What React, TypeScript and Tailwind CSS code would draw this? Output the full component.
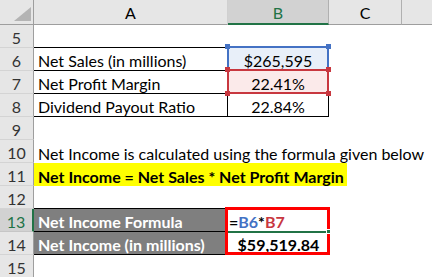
const rows = [5, 6, 7, 8, 9, 10, 11, 12, 13, 14, 15];

function RowHead({ n }: { n: number }) {
  const active = n === 13;
  return (
    <div
      className={`flex items-end justify-center border-b ${
        active
          ? "bg-[#d2d2d2] text-[#217346] border-r-2 border-r-[#217346] border-b-[#c6c6c6]"
          : "bg-[#e6e6e6] text-[#333] border-r border-r-[#9e9e9e] border-b-[#d4d4d4]"
      }`}
    >
      {n}
    </div>
  );
}

export default function App() {
  return (
    <div className="relative w-[432px] h-[277px] overflow-hidden bg-white text-[16px] leading-[19px] text-black font-[family-name:Lato,sans-serif]">
      <div className="grid grid-cols-[34px_194px_101px_73px_30px] grid-rows-[25px_repeat(11,23px)]">
        {/* column headers */}
        <div className="relative bg-[#e6e6e6] border-r border-b border-[#9e9e9e]">
          <svg className="absolute left-[14px] top-[7px]" width="17" height="14" viewBox="0 0 17 14">
            <polygon points="17,0 17,14 0,14" fill="#b4b4b4" />
          </svg>
        </div>
        <div className="flex items-end justify-center pb-[2px] bg-[#e6e6e6] border-r border-r-[#d0d0d0] border-b border-b-[#9e9e9e]">A</div>
        <div className="flex items-end justify-center pb-[1px] bg-[#d2d2d2] text-[#217346] border-r border-r-[#b0b0b0] border-b-2 border-b-[#217346]">B</div>
        <div className="flex items-end justify-center pb-[2px] bg-[#e6e6e6] border-r border-r-[#b0b0b0] border-b border-b-[#9e9e9e]">C</div>
        <div className="bg-[#e6e6e6] border-b border-b-[#9e9e9e]"></div>

        {/* row 5 */}
        <RowHead n={rows[0]} />
        <div className="border-b border-black"></div>
        <div className="border-b border-black"></div>
        <div></div>
        <div></div>

        {/* row 6 */}
        <RowHead n={6} />
        <div className="flex items-end px-[4px] border-r border-b border-black whitespace-nowrap">Net Sales (in millions)</div>
        <div className="flex items-end justify-center border-r border-b border-black bg-[#e8eff9]">$265,595</div>
        <div></div>
        <div></div>

        {/* row 7 */}
        <RowHead n={7} />
        <div className="flex items-end px-[4px] border-r border-b border-black whitespace-nowrap">Net Profit Margin</div>
        <div className="flex items-end justify-center border-r border-b border-black bg-[#fbeaea]">22.41%</div>
        <div></div>
        <div></div>

        {/* row 8 */}
        <RowHead n={8} />
        <div className="flex items-end px-[4px] border-r border-b border-black whitespace-nowrap">Dividend Payout Ratio</div>
        <div className="flex items-end justify-center border-r border-b border-black">22.84%</div>
        <div></div>
        <div></div>

        {/* row 9 */}
        <RowHead n={9} />
        <div className="col-span-4"></div>

        {/* row 10 */}
        <RowHead n={10} />
        <div className="col-span-4 flex items-end px-[4px] whitespace-nowrap">
          Net Income is calculated using the formula given below
        </div>

        {/* row 11 */}
        <RowHead n={11} />
        <div className="col-span-4 flex">
          <div className="w-[313px] flex items-end px-[4px] bg-[#ffff00] font-bold whitespace-nowrap">
            Net Income = Net Sales * Net Profit Margin
          </div>
        </div>

        {/* row 12 */}
        <RowHead n={12} />
        <div className="border-b border-black"></div>
        <div className="border-b border-black"></div>
        <div></div>
        <div></div>

        {/* row 13 */}
        <RowHead n={13} />
        <div className="flex items-end px-[4px] bg-[#7f7f7f] text-white font-bold border-r border-b border-black whitespace-nowrap">Net Income Formula</div>
        <div className="flex items-end px-[1px] font-bold border-b border-black">
          <span>=</span>
          <span className="text-[#4472c4]">B6</span>
          <span>*</span>
          <span className="text-[#c8373f]">B7</span>
        </div>
        <div></div>
        <div></div>

        {/* row 14 */}
        <RowHead n={14} />
        <div className="flex items-end px-[4px] bg-[#7f7f7f] text-white font-bold border-r border-b border-black whitespace-nowrap">Net Income (in millions)</div>
        <div className="flex items-end justify-center font-bold border-b border-black">$59,519.84</div>
        <div></div>
        <div></div>

        {/* row 15 */}
        <RowHead n={15} />
        <div className="col-span-4"></div>
      </div>

      {/* formula reference highlights */}
      <div className="absolute left-[227px] top-[46px] w-[102px] h-[25px] border-2 border-[#4472c4]"></div>
      <div className="absolute left-[227px] top-[69px] w-[102px] h-[25px] border-2 border-[#c8373f]"></div>
      <div className="absolute left-[225px] top-[44px] w-[5px] h-[5px] bg-[#4472c4]"></div>
      <div className="absolute left-[326px] top-[44px] w-[5px] h-[5px] bg-[#4472c4]"></div>
      <div className="absolute left-[225px] top-[67px] w-[5px] h-[5px] bg-[#c8373f]"></div>
      <div className="absolute left-[326px] top-[67px] w-[5px] h-[5px] bg-[#c8373f]"></div>
      <div className="absolute left-[225px] top-[91px] w-[5px] h-[5px] bg-[#c8373f]"></div>
      <div className="absolute left-[326px] top-[91px] w-[5px] h-[5px] bg-[#c8373f]"></div>

      {/* active cell + red callout box */}
      <div className="absolute left-[228px] top-[231px] w-[99px] h-[2px] bg-[#217346]"></div>
      <div className="absolute left-[225px] top-[207px] w-[105px] h-[48px] border-[3px] border-[#ff0000]"></div>
      <div className="absolute left-[326px] top-[229px] w-[5px] h-[5px] bg-[#217346] border border-white"></div>
    </div>
  );
}
